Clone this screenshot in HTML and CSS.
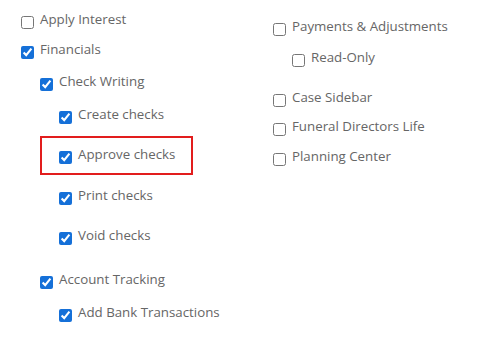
FILE: index.html
```html
<!DOCTYPE html>
<html>
<head>
<meta charset="utf-8">
<link rel="stylesheet" href="styles.css">
</head>
<body>
<div class="page">
  <div class="col col-left">
    <div class="item">
      <label class="row"><input type="checkbox" class="cb"><span>Apply Interest</span></label>
    </div>
    <div class="item">
      <label class="row"><input type="checkbox" class="cb" checked><span>Financials</span></label>
      <div class="children">
        <div class="item sub">
          <label class="row"><input type="checkbox" class="cb" checked><span>Check Writing</span></label>
          <div class="children wide">
            <div class="item"><label class="row"><input type="checkbox" class="cb" checked><span>Create checks</span></label></div>
            <div class="item"><label class="row highlight"><input type="checkbox" class="cb" checked><span>Approve checks</span></label></div>
            <div class="item"><label class="row"><input type="checkbox" class="cb" checked><span>Print checks</span></label></div>
            <div class="item"><label class="row"><input type="checkbox" class="cb" checked><span>Void checks</span></label></div>
          </div>
        </div>
        <div class="item sub">
          <label class="row"><input type="checkbox" class="cb" checked><span>Account Tracking</span></label>
          <div class="children">
            <div class="item"><label class="row"><input type="checkbox" class="cb" checked><span>Add Bank Transactions</span></label></div>
          </div>
        </div>
      </div>
    </div>
  </div>
  <div class="col col-right">
    <div class="item parent">
      <label class="row"><input type="checkbox" class="cb"><span>Payments &amp; Adjustments</span></label>
      <div class="children">
        <div class="item"><label class="row"><input type="checkbox" class="cb"><span>Read-Only</span></label></div>
      </div>
    </div>
    <div class="item"><label class="row"><input type="checkbox" class="cb"><span>Case Sidebar</span></label></div>
    <div class="item"><label class="row"><input type="checkbox" class="cb"><span>Funeral Directors Life</span></label></div>
    <div class="item"><label class="row"><input type="checkbox" class="cb"><span>Planning Center</span></label></div>
  </div>
</div>
</body>
</html>
```
FILE: styles.css
```css
html, body {
  margin: 0;
  padding: 0;
  background: #ffffff;
}

.page {
  display: grid;
  grid-template-columns: 252px 1fr;
  padding: 9px 0 0 21px;
  font-family: "Open Sans", "Liberation Sans", sans-serif;
  font-size: 13.3px;
  line-height: 20px;
  color: #666666;
}

.col {
  display: flex;
  flex-direction: column;
  gap: 9.5px;
}

.col-right {
  padding-top: 7px;
}

.row {
  display: flex;
  align-items: flex-start;
  gap: 6px;
  height: 20px;
  white-space: nowrap;
}

.cb {
  width: 13px;
  height: 13px;
  margin: 7px 0 0 0;
  flex: none;
  accent-color: #1570d8;
}

.children {
  display: flex;
  flex-direction: column;
  gap: 24px;
  padding-left: 19px;
  margin-top: 12.5px;
}

.children.wide {
  gap: 20.5px;
}

.parent {
  margin-bottom: 10px;
}

.col-right .children {
  margin-top: 11px;
}

.highlight {
  position: relative;
}

.highlight::before {
  content: "";
  position: absolute;
  left: -19px;
  top: -8px;
  width: 149px;
  height: 35px;
  border: 2px solid #e21d1d;
  pointer-events: none;
}
```
